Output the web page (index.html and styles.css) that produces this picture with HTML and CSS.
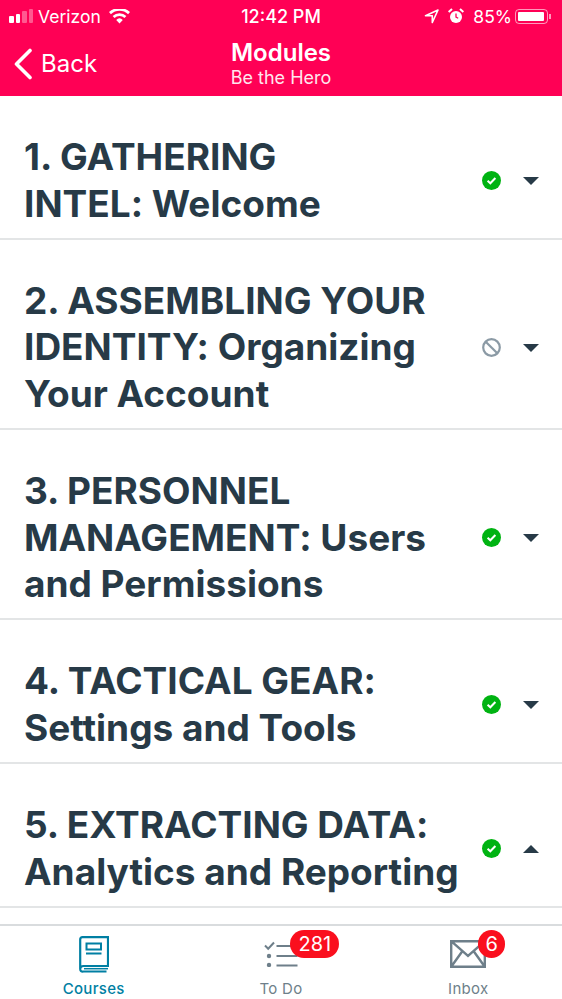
FILE: index.html
```html
<!DOCTYPE html>
<html>
<head>
	<title>Modules</title>
	<meta charset="UTF-8">
	<link rel="stylesheet" href="styles.css">
</head>
<body>
<div id="container">
	<div class="top">
		<div class="status">
			<div class="status-left">
				<span class="signal"><i class="on"></i><i class="on"></i><i></i><i></i></span>
				<span>Verizon</span>
				<svg class="wifi" width="21" height="15" viewBox="0 0 21 15"><path d="M10.5 14.5 7.2 10.9a4.8 4.8 0 0 1 6.6 0zM5.5 9.1 3.6 7a10 10 0 0 1 13.8 0l-1.9 2.1a7.3 7.3 0 0 0-10 0zM1.9 5.2 0 3.1a15.4 15.4 0 0 1 21 0l-1.9 2.1a12.7 12.7 0 0 0-17.2 0z" fill="#fff"/></svg>
			</div>
			<div class="status-time">12:42 PM</div>
			<div class="status-right">
				<svg width="15" height="15" viewBox="0 0 15 15"><path d="M14 1 8.3 13.5V6.7H1.5z" fill="none" stroke="#fff" stroke-width="1.6" stroke-linejoin="round"/></svg>
				<svg class="alarm" width="16" height="16" viewBox="0 0 16 16"><circle cx="8" cy="9" r="6" fill="#fff"/><path d="M8 5.5V9l2.2 1.2" fill="none" stroke="#ff0055" stroke-width="1.3"/><path d="M.6 4 4 .9M15.4 4 12 .9" stroke="#fff" stroke-width="2"/></svg>
				<span class="pct">85%</span>
				<span class="battery"><span class="battery-fill"></span></span>
				<span class="battery-tip"></span>
			</div>
		</div>
		<div class="nav">
			<div class="back">
				<svg width="20" height="32" viewBox="0 0 20 32"><path d="M17 2.5 3.5 16 17 29.500" fill="none" stroke="#fff" stroke-width="3.600" stroke-linecap="round" stroke-linejoin="round"/></svg>
				<span>Back</span>
			</div>
			<div class="nav-title">
				<div class="title">Modules</div>
				<div class="subtitle">Be the Hero</div>
			</div>
		</div>
	</div>

	<div class="modules">
		<div class="module">
			<div class="name">1. GATHERING INTEL:&nbsp;Welcome</div>
			<svg class="state" width="19" height="19" viewBox="0 0 19 19"><circle cx="9.500" cy="9.500" r="9.500" fill="#00b312"/><path d="M5.600 9.800 8.300 12.300 13.400 7" fill="none" stroke="#fff" stroke-width="2"/></svg>
			<span class="caret"></span>
		</div>
		<div class="module">
			<div class="name">2. ASSEMBLING YOUR IDENTITY: Organizing Your Account</div>
			<svg class="state" width="19" height="19" viewBox="0 0 19 19"><circle cx="9.500" cy="9.500" r="8.300" fill="none" stroke="#8b9aa5" stroke-width="2.200"/><path d="M3.700 3.700 15.300 15.300" stroke="#8b9aa5" stroke-width="2.200"/></svg>
			<span class="caret"></span>
		</div>
		<div class="module">
			<div class="name">3. PERSONNEL MANAGEMENT: Users and Permissions</div>
			<svg class="state" width="19" height="19" viewBox="0 0 19 19"><circle cx="9.500" cy="9.500" r="9.500" fill="#00b312"/><path d="M5.600 9.800 8.300 12.300 13.400 7" fill="none" stroke="#fff" stroke-width="2"/></svg>
			<span class="caret"></span>
		</div>
		<div class="module">
			<div class="name">4. TACTICAL GEAR: Settings and Tools</div>
			<svg class="state" width="19" height="19" viewBox="0 0 19 19"><circle cx="9.500" cy="9.500" r="9.500" fill="#00b312"/><path d="M5.600 9.800 8.300 12.300 13.400 7" fill="none" stroke="#fff" stroke-width="2"/></svg>
			<span class="caret"></span>
		</div>
		<div class="module">
			<div class="name">5. EXTRACTING DATA: Analytics and Reporting</div>
			<svg class="state" width="19" height="19" viewBox="0 0 19 19"><circle cx="9.500" cy="9.500" r="9.500" fill="#00b312"/><path d="M5.600 9.800 8.300 12.300 13.400 7" fill="none" stroke="#fff" stroke-width="2"/></svg>
			<span class="caret up"></span>
		</div>
	</div>

	<div class="tabs">
		<div class="tab active">
			<svg width="30" height="37" viewBox="0 0 30 37"><path d="M3.500 1.200H29V30H4.500Q1.200 30 1.200 33T4.500 35.500H27.500M1.200 33V3.500Q1.200 1.200 3.500 1.200" fill="none" stroke="#007fa3" stroke-width="2.200"/><path d="M5 32.700H29" stroke="#007fa3" stroke-width="1.500"/><path d="M7.500 7.500H22V13.500H7.500zM7 17.500H22.500" fill="none" stroke="#007fa3" stroke-width="2"/></svg>
			<span>Courses</span>
		</div>
		<div class="tab">
			<div class="tab-icon">
				<svg width="34" height="26" viewBox="0 0 34 26"><path d="M1 4.500 4.200 7.700 10 1.500" fill="none" stroke="#6e7f8a" stroke-width="2"/><path d="M12.500 5H33.500M12.500 15H33.500M12.500 24.500H33.500" stroke="#6e7f8a" stroke-width="2"/><circle cx="5" cy="15" r="2.200" fill="#6e7f8a"/><circle cx="5" cy="24" r="2.200" fill="#6e7f8a"/></svg>
				<span class="badge">281</span>
			</div>
			<span>To Do</span>
		</div>
		<div class="tab">
			<div class="tab-icon inbox">
				<svg width="36" height="28" viewBox="0 0 36 28"><path d="M1.200 1.200H34.800V26.800H1.200zM1.200 1.200 18 16 34.800 1.200M1.200 26.800 12.500 11M34.800 26.800 23.500 11" fill="none" stroke="#6e7f8a" stroke-width="2.400"/></svg>
				<span class="badge single">6</span>
			</div>
			<span>Inbox</span>
		</div>
	</div>
</div>
</body>
</html>
```

FILE: styles.css
```css
html, body { margin: 0; padding: 0; background: #fff; }
body { font-family: "Inter", "Liberation Sans", sans-serif; }

#container { width: 562px; height: 999px; display: flex; flex-direction: column; overflow: hidden; }

.top { height: 96px; background: #ff0055; color: #fff; flex: none; }

.status { height: 32px; display: flex; align-items: center; justify-content: space-between; font-size: 17.500px; padding: 0 11px 0 9px; position: relative; }
.status-left { display: flex; align-items: center; gap: 7px; }
.status-right { display: flex; align-items: center; gap: 6px; }
.status-time { font-weight: 500; position: absolute; left: 0; right: 0; text-align: center; font-size: 18px; }
.pct { margin-right: -3px; }

.signal { display: flex; align-items: flex-end; gap: 2px; height: 14px; margin-right: -2px; }
.signal i { display: block; width: 4.500px; background: rgba(255,255,255,.35); border-radius: 1px; }
.signal i:nth-child(1) { height: 7px; }
.signal i:nth-child(2) { height: 9px; }
.signal i:nth-child(3) { height: 12px; }
.signal i:nth-child(4) { height: 14px; }
.signal i.on { background: #fff; }
.wifi { margin-left: 1px; }
.alarm { margin-left: 3px; margin-right: 3px; }

.battery { width: 33px; height: 15px; border: 1px solid rgba(255,255,255,.6); border-radius: 4px; padding: 2px; box-sizing: border-box; display: block; }
.battery-fill { display: block; width: 26px; height: 9px; background: #fff; border-radius: 1px; }
.battery-tip { width: 2px; height: 5px; background: rgba(255,255,255,.6); margin-left: -5px; }

.nav { height: 64px; position: relative; display: flex; align-items: center; }
.back { display: flex; align-items: center; gap: 8px; font-size: 24px; padding-left: 13px; margin-top: -1px; }
.nav-title { position: absolute; left: 0; right: 0; top: 6px; text-align: center; }
.title { font-size: 24px; font-weight: 600; line-height: 29px; }
.subtitle { font-size: 18px; line-height: 22px; opacity: .9; }

.modules { flex: 1; }
.module { display: flex; align-items: center; padding: 38px 23px 10.800px 24px; border-bottom: 2px solid #e3e5e6; }
.name { flex: 1; font-size: 37px; font-weight: 700; line-height: 46.500px; color: #273a47; padding-right: 14px; font-feature-settings: "calt" 0; }
.state { flex: none; margin-right: 22px; }
.caret { flex: none; width: 0; height: 0; border-left: 8px solid transparent; border-right: 8px solid transparent; border-top: 8px solid #273a47; }
.caret.up { border-top: 0; border-bottom: 8px solid #273a47; }

.tabs { height: 75px; flex: none; border-top: 2px solid #d9dcde; box-sizing: border-box; display: flex; background: #fff; }
.tab { flex: 1; display: flex; flex-direction: column; align-items: center; font-size: 15px; color: #6e7f8a; padding-top: 10px; letter-spacing: .3px; }
.tab span { line-height: 18px; }
.tab > svg { margin-bottom: 7px; }
.tab.active { color: #007fa3; font-weight: 500; }
.tab-icon { height: 37px; margin-bottom: 7px; padding-top: 5px; box-sizing: border-box; position: relative; }
.tab-icon.inbox { padding-top: 4px; }
.tab-icon svg { display: block; }
.badge { position: absolute; left: 26.500px; top: -6px; height: 28px; min-width: 27px; padding: 0 8px; box-sizing: border-box; background: #fa0f1e; color: #fff; border-radius: 14px; font-size: 20px; line-height: 28px !important; text-align: center; letter-spacing: 0; }
.badge.single { left: 28px; padding: 0; }
```
